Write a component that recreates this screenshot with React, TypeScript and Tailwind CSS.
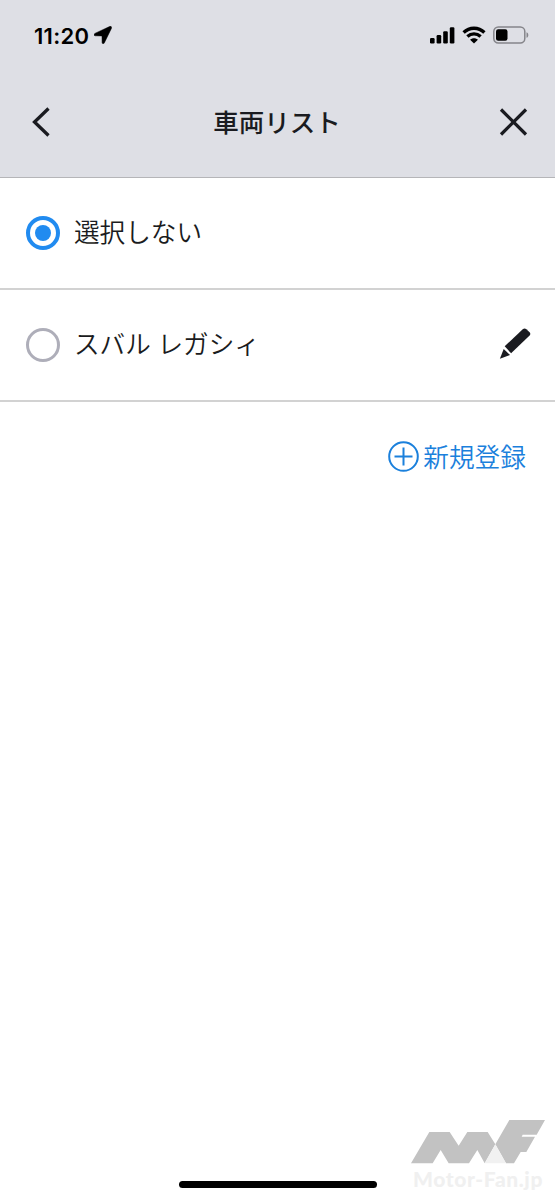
import React, { useState } from 'react';

interface Vehicle {
  id: string;
  name: string;
  editable: boolean;
}

const vehicles: Vehicle[] = [
  { id: 'none', name: '選択しない', editable: false },
  { id: 'legacy', name: 'スバル レガシィ', editable: true },
];

const StatusBar: React.FC = () => (
  <div className="flex h-[70px] items-center justify-between pl-[34px] pr-[26px]">
    <div className="flex items-center gap-[5px] text-black">
      <span className="pt-px font-['Inter'] text-[22px] font-semibold leading-none tracking-[0.3px]">11:20</span>
      <svg width="18" height="18" viewBox="0 0 18 18" fill="currentColor">
        <path d="M15.500.6.9 7.400C-.3 8-.1 9.800 1.200 9.800l6.300.1c.3 0 .5.2.5.500l.1 6.200c0 1.400 1.600 1.600 2.200.4L17.400 2.400C18 .9 16.900-.1 15.500.6Z" stroke="currentColor" strokeWidth="0.500" />
      </svg>
    </div>
    <div className="flex items-center gap-[7px]">
      <svg width="25" height="17" viewBox="0 0 25 17">
        <rect x="0" y="11" width="4.600" height="5.500" rx="1.200" />
        <rect x="6.600" y="8" width="4.600" height="8.500" rx="1.200" />
        <rect x="13.200" y="4.300" width="4.600" height="12.200" rx="1.200" />
        <rect x="19.800" y="0.300" width="4.600" height="16.200" rx="1.200" />
      </svg>
      <svg width="24" height="18" viewBox="0 0 24 18" fill="none" stroke="black" strokeWidth="3.300">
        <path d="M1.600 6.500C7.400.8 16.600.8 22.400 6.500" />
        <path d="M5.400 10.500c3.800-3.600 9.400-3.600 13.200 0" />
        <path d="M12 17.500 8.100 13.700c2.200-2 5.600-2 7.800 0Z" fill="black" stroke="none" />
      </svg>
      <svg width="36" height="18" viewBox="0 0 36 18">
        <rect x="0.800" y="1" width="31" height="16" rx="4.500" fill="none" stroke="#85858a" strokeWidth="1.500" />
        <rect x="3" y="3.200" width="11.500" height="11.600" rx="2.200" />
        <path d="M33.500 6.200c2.400.8 2.400 4.800 0 5.600Z" fill="#85858a" />
      </svg>
    </div>
  </div>
);

const PencilIcon: React.FC = () => (
  <svg className="mb-[2px]" width="32" height="32" viewBox="0 0 32 32" fill="#1a1b20">
    <path d="M5.700 18.300 24 1Q25.800-.3 27.400 1.200L30.600 4.300Q32 6 30.600 7.600L12.100 25.300Z" />
    <path d="m4.700 20.900 6.300 6L.9 30.800Z" />
  </svg>
);

const Watermark: React.FC = () => (
  <div className="absolute bottom-0 right-0 h-[90px] w-[155px]">
    <svg width="155" height="90" viewBox="0 0 465 270">
      <path
        d="M33 160 88 66H149L176 107 202 66H263L286 103 328 30H435L410 74H368L365 80H405L379 126H362L342 160H318L286 103 254 160 232 120 207 160H146L122 120 98 160Z"
        fill="#c2c2c2"
      />
      <path d="m286 103 32 57H254Z" fill="#f1f1f1" />
    </svg>
    <span className="absolute left-[13px] top-[57px] font-['Lato'] text-[21px] font-black leading-6 tracking-[0.600px] text-[#f0f0f0]">
      Motor-Fan.jp
    </span>
  </div>
);

const App: React.FC = () => {
  const [selected, setSelected] = useState('none');

  return (
    <div className="relative flex h-[1200px] w-[555px] flex-col overflow-hidden bg-white font-['Noto_Sans_CJK_JP',sans-serif] text-[#1a1b20]">
      <header className="h-[178px] border-b border-[#b5b5b8] bg-[#dedfe5]">
        <StatusBar />
        <div className="flex h-[104px] items-center justify-between pl-[32px] pr-[27px]">
          <button aria-label="戻る">
            <svg width="23" height="30" viewBox="0 0 23 30" fill="none" stroke="currentColor" strokeWidth="3.300">
              <path d="M16.500 1.500 2.500 15l14 13.500" />
            </svg>
          </button>
          <h1 className="pb-[3px] text-[25.500px] font-medium leading-none">車両リスト</h1>
          <button aria-label="閉じる">
            <svg width="29" height="30" viewBox="0 0 29 30" fill="none" stroke="currentColor" strokeWidth="3.200">
              <path d="m2 2.500 25 25M27 2.500l-25 25" />
            </svg>
          </button>
        </div>
      </header>

      {vehicles.map(vehicle => (
        <div
          key={vehicle.id}
          className="flex h-[112px] items-center justify-between border-b-2 border-[#d2d2d2] pl-[26px] pr-[24px]"
        >
          <button className="flex items-center gap-[14px]" onClick={() => setSelected(vehicle.id)}>
            {selected === vehicle.id ? (
              <span className="flex size-[34px] items-center justify-center rounded-full border-4 border-[#218bf0]">
                <span className="size-[16px] rounded-full bg-[#218bf0]" />
              </span>
            ) : (
              <span className="size-[34px] rounded-full border-[3.500px] border-[#aeaeb9]" />
            )}
            <span className="pb-[4px] text-[25.600px] font-[350] leading-none [word-spacing:1px]">{vehicle.name}</span>
          </button>
          {vehicle.editable && (
            <button aria-label="編集">
              <PencilIcon />
            </button>
          )}
        </div>
      ))}

      <div className="flex h-[109px] items-center justify-end pr-[29px]">
        <button className="flex items-center gap-[4px] text-[#1b80dc]">
          <svg width="31" height="31" viewBox="0 0 31 31" fill="none" stroke="currentColor" strokeWidth="2">
            <circle cx="15.500" cy="15.500" r="14.300" />
            <path d="M6.500 15.500h18M15.500 6.500v18" />
          </svg>
          <span className="pb-[2px] text-[25.700px] font-[350] leading-none">新規登録</span>
        </button>
      </div>

      <Watermark />
      <div className="absolute bottom-[12px] left-[179px] h-[7px] w-[198px] rounded-full bg-black" />
    </div>
  );
};

export default App;
